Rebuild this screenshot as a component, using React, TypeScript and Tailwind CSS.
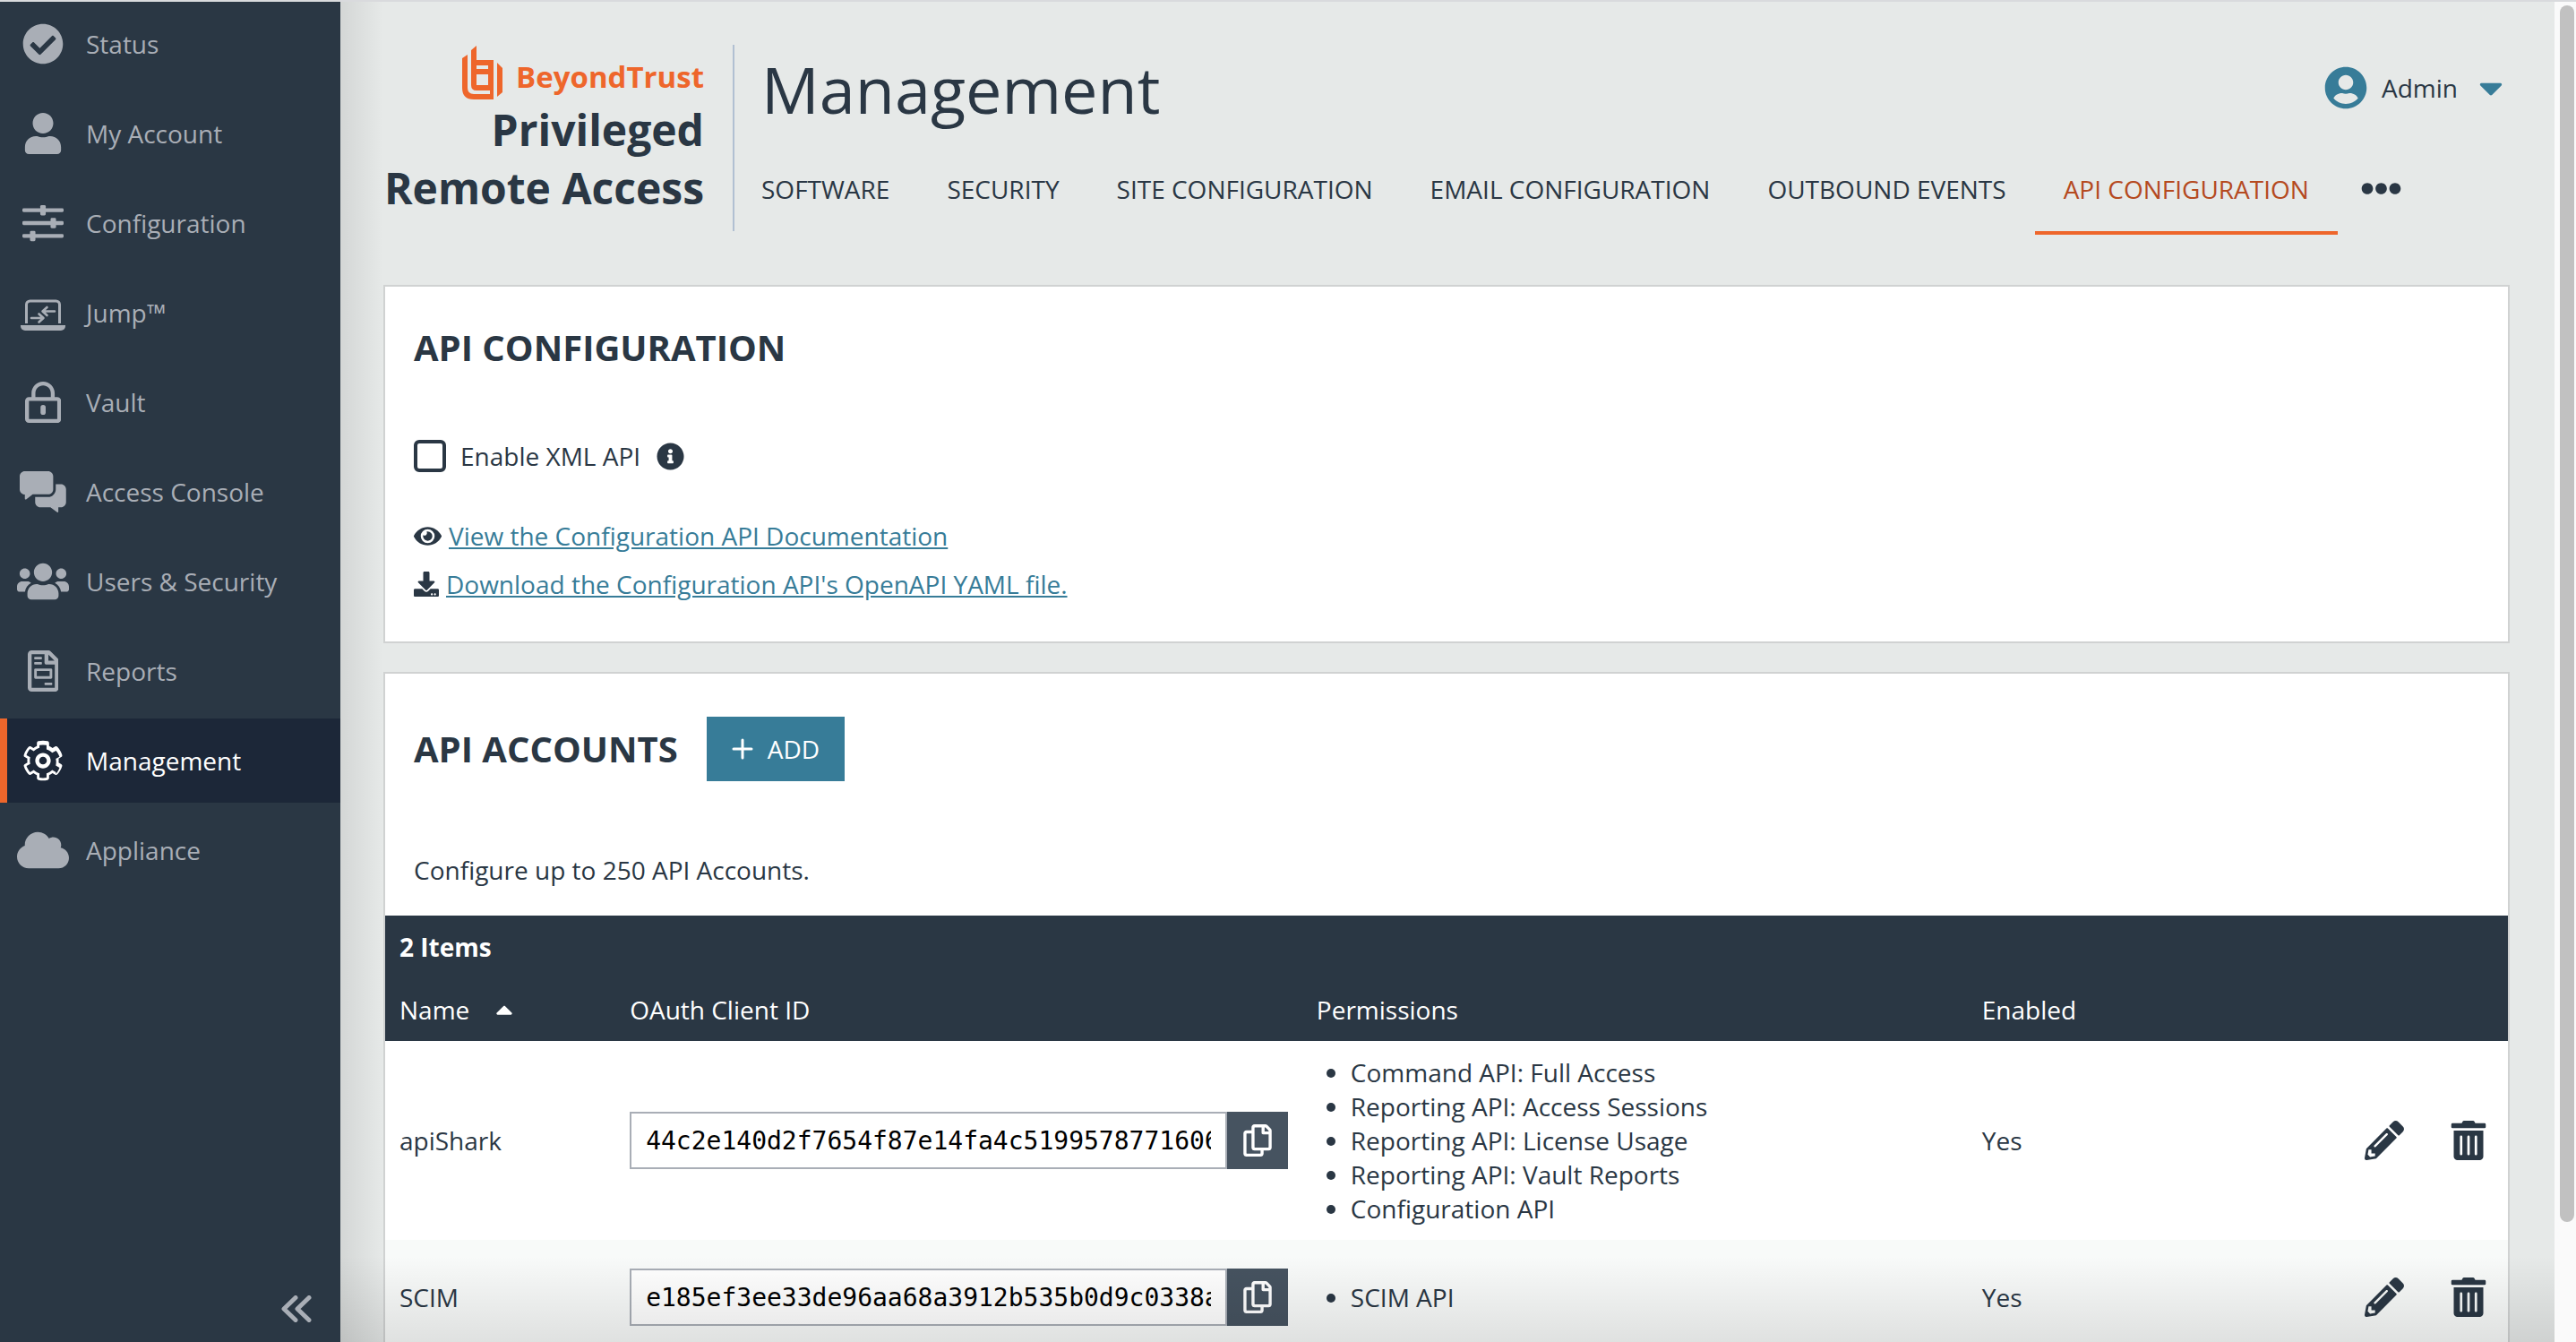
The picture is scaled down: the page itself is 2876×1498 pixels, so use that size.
import React, { useState } from "react";
import {
  FaCaretDown,
  FaCaretUp,
  FaCheckCircle,
  FaCloud,
  FaDownload,
  FaEllipsisH,
  FaEye,
  FaInfoCircle,
  FaPencilAlt,
  FaRegCopy,
  FaTrashAlt,
  FaUser,
  FaUserCircle,
  FaUsers,
} from "react-icons/fa";

function SlidersIcon() {
  return (
    <svg viewBox="0 0 512 512" className="h-[46px] w-[46px]" fill="currentColor" aria-hidden="true">
      <rect x="0" y="72" width="512" height="48" rx="16" />
      <rect x="0" y="232" width="512" height="48" rx="16" />
      <rect x="0" y="392" width="512" height="48" rx="16" />
      <rect x="222" y="32" width="68" height="128" rx="16" />
      <rect x="350" y="192" width="68" height="128" rx="16" />
      <rect x="94" y="352" width="68" height="128" rx="16" />
    </svg>
  );
}

function JumpIcon() {
  return (
    <svg viewBox="0 0 50 46" className="h-[46px] w-[50px]" aria-hidden="true">
      <path d="M6.5 35V14a4 4 0 0 1 4-4h29a4 4 0 0 1 4 4v21" fill="none" stroke="currentColor" strokeWidth="3" />
      <path d="M0 37h50v1a5 5 0 0 1-5 5H5a5 5 0 0 1-5-5z" fill="currentColor" />
      <g fill="none" stroke="currentColor" strokeWidth="2.6" strokeLinecap="round" strokeLinejoin="round">
        <path d="M38 21.5H25M29.5 17l-5 4.5 5 4.5" />
        <path d="M12 29h13M20.500 24.500l5 4.500-5 4.500" />
      </g>
    </svg>
  );
}

function LockIcon() {
  return (
    <svg viewBox="0 0 448 512" className="h-[46px]" fill="currentColor" aria-hidden="true">
      <path d="M400 192h-32v-48C368 64.500 303.500 0 224 0S80 64.500 80 144v48H48c-26.500 0-48 21.500-48 48v224c0 26.500 21.500 48 48 48h352c26.500 0 48-21.500 48-48V240c0-26.500-21.500-48-48-48zm-272-48c0-52.900 43.100-96 96-96s96 43.100 96 96v48H128v-48zm272 320H48V240h352v224z" />
      <rect x="192" y="290" width="64" height="122" rx="32" />
    </svg>
  );
}

function CommentsIcon() {
  return (
    <svg viewBox="0 0 576 512" className="h-[46px]" fill="currentColor" aria-hidden="true">
      <path d="M416 224V64c0-35.300-28.700-64-64-64H64C28.700 0 0 28.700 0 64v160c0 35.300 28.700 64 64 64v54.200c0 8 9.100 12.600 15.500 7.800l82.800-62.100H352c35.300.1 64-28.600 64-63.900zm96-64h-64v64c0 52.900-43.100 96-96 96H192v64c0 35.300 28.700 64 64 64h125.700l82.800 62.100c6.400 4.800 15.500.2 15.500-7.800V448h32c35.300 0 64-28.700 64-64V224c0-35.300-28.700-64-64-64z" />
    </svg>
  );
}

function ReportIcon() {
  return (
    <svg viewBox="0 0 384 512" className="h-[46px]" fill="currentColor" aria-hidden="true">
      <path d="M369.900 97.900L286 14C277 5 264.800 0 252.100 0H48C21.500 0 0 21.500 0 48v416c0 26.500 21.500 48 48 48h288c26.500 0 48-21.500 48-48V131.900c0-12.700-5.100-25-14.100-34zM332.100 128H256V51.900l76.100 76.100zM48 464V48h160v104c0 13.300 10.700 24 24 24h104v288H48z" />
      <rect x="80" y="80" width="96" height="32" rx="8" />
      <rect x="80" y="144" width="96" height="32" rx="8" />
      <rect x="208" y="400" width="96" height="32" rx="8" />
      <path d="M96 224h192a16 16 0 0 1 16 16v96a16 16 0 0 1-16 16H96a16 16 0 0 1-16-16v-96a16 16 0 0 1 16-16zm16 32v64h160v-64z" fillRule="evenodd" />
    </svg>
  );
}

function GearIcon() {
  return (
    <svg viewBox="0 0 512 512" className="h-[46px]" fill="currentColor" aria-hidden="true">
      <path d="M482.696 299.276l-32.610-18.827a195.168 195.168 0 0 0 0-48.899l32.610-18.827c9.576-5.528 14.195-16.902 11.046-27.501-11.214-37.749-31.175-71.728-57.535-99.595-7.634-8.070-19.817-9.836-29.437-4.282l-32.562 18.798a194.125 194.125 0 0 0-42.339-24.480V38.049c0-11.130-7.652-20.804-18.484-23.367-37.644-8.909-77.118-8.910-114.770 0-10.831 2.563-18.484 12.236-18.484 23.367v37.614a194.101 194.101 0 0 0-42.339 24.480L105.230 81.345c-9.621-5.554-21.804-3.788-29.437 4.282-26.360 27.867-46.321 61.847-57.535 99.595-3.149 10.599 1.470 21.972 11.046 27.501l32.610 18.827a195.168 195.168 0 0 0 0 48.899l-32.610 18.827c-9.576 5.528-14.195 16.902-11.046 27.501 11.214 37.748 31.175 71.728 57.535 99.595 7.634 8.070 19.817 9.836 29.437 4.283l32.562-18.798a194.080 194.080 0 0 0 42.339 24.479v37.614c0 11.130 7.652 20.804 18.484 23.367 37.645 8.909 77.118 8.910 114.770 0 10.831-2.563 18.484-12.236 18.484-23.367v-37.614a194.138 194.138 0 0 0 42.339-24.479l32.562 18.798c9.620 5.554 21.803 3.788 29.437-4.283 26.360-27.867 46.321-61.847 57.535-99.595 3.149-10.599-1.470-21.972-11.046-27.501zm-65.479 100.461l-46.309-26.740c-26.988 23.071-36.559 28.876-71.039 41.059v53.479a217.145 217.145 0 0 1-87.738 0v-53.479c-33.621-11.879-43.355-17.395-71.039-41.059l-46.309 26.740c-19.710-22.090-34.689-47.989-43.929-75.958l46.329-26.740c-6.535-35.417-6.538-46.644 0-82.079l-46.329-26.740c9.240-27.969 24.220-53.869 43.929-75.969l46.309 26.760c27.377-23.434 37.063-29.065 71.039-41.069V64.465a216.790 216.790 0 0 1 87.738 0v53.479c33.978 12.005 43.665 17.637 71.039 41.069l46.309-26.760c19.709 22.099 34.689 47.999 43.929 75.969l-46.329 26.740c6.536 35.426 6.538 46.644 0 82.079l46.329 26.740c-9.240 27.968-24.219 53.868-43.929 75.957zM256 160c-52.935 0-96 43.065-96 96s43.065 96 96 96 96-43.065 96-96-43.065-96-96-96zm0 144c-26.468 0-48-21.532-48-48 0-26.467 21.532-48 48-48s48 21.533 48 48c0 26.468-21.532 48-48 48z" />
    </svg>
  );
}

function CollapseIcon() {
  return (
    <svg viewBox="0 0 34 30" className="h-[30px] w-[34px]" fill="none" stroke="currentColor" strokeWidth="5" strokeLinecap="round" strokeLinejoin="round" aria-hidden="true">
      <path d="M16 2.500L3 15l13 12.500M31 2.500L18 15l13 12.500" />
    </svg>
  );
}

function BrandMark() {
  return (
    <svg viewBox="0 0 46 60" className="h-[60px] w-[46px]" fill="currentColor" aria-hidden="true">
      <path d="M0 14l6-4v37q0 7 7 7h18v-4H16q-6 0-6-6V5l6-5v16h19v44H13Q0 60 0 47zM16 22v4h13v-4zM16 32v12h13V32z" fillRule="evenodd" />
      <path d="M39 19l6 6v27l-6 5z" />
    </svg>
  );
}

const navItems = [
  { label: "Status", icon: <FaCheckCircle size={46} /> },
  { label: "My Account", icon: <FaUser size={46} /> },
  { label: "Configuration", icon: <SlidersIcon /> },
  { label: "Jump™", icon: <JumpIcon /> },
  { label: "Vault", icon: <LockIcon /> },
  { label: "Access Console", icon: <CommentsIcon /> },
  { label: "Users & Security", icon: <FaUsers size={58} /> },
  { label: "Reports", icon: <ReportIcon /> },
  { label: "Management", icon: <GearIcon />, active: true },
  { label: "Appliance", icon: <FaCloud size={58} /> },
];

const tabs = [
  { label: "SOFTWARE" },
  { label: "SECURITY" },
  { label: "SITE CONFIGURATION" },
  { label: "EMAIL CONFIGURATION" },
  { label: "OUTBOUND EVENTS" },
  { label: "API CONFIGURATION", active: true },
];

const accounts = [
  {
    name: "apiShark",
    clientId: "44c2e140d2f7654f87e14fa4c5199578771606",
    permissions: [
      "Command API: Full Access",
      "Reporting API: Access Sessions",
      "Reporting API: License Usage",
      "Reporting API: Vault Reports",
      "Configuration API",
    ],
    enabled: "Yes",
  },
  {
    name: "SCIM",
    clientId: "e185ef3ee33de96aa68a3912b535b0d9c0338a",
    permissions: ["SCIM API"],
    enabled: "Yes",
  },
];

function Sidebar() {
  return (
    <aside className="flex w-[380px] shrink-0 flex-col justify-between bg-[#2a3744]">
      <nav aria-label="Main">
        <ul className="flex flex-col gap-[6px]">
          {navItems.map((item) => (
            <li key={item.label}>
              <a
                href="#"
                aria-current={item.active ? "page" : undefined}
                className={
                  item.active
                    ? "flex h-[94px] items-center gap-4 border-l-8 border-[#ee662b] bg-[#1c2738] pl-2 text-white"
                    : "flex h-[94px] items-center gap-4 pl-4 text-[#a9aeb6]"
                }
              >
                <span className="flex w-16 shrink-0 justify-center">{item.icon}</span>
                <span>{item.label}</span>
              </a>
            </li>
          ))}
        </ul>
      </nav>
      <div className="flex justify-end pr-8 pb-[22px]">
        <button type="button" aria-label="Collapse menu" className="text-[#a9aeb6]">
          <CollapseIcon />
        </button>
      </div>
    </aside>
  );
}

function Header() {
  return (
    <header className="flex pt-12">
      <div className="flex h-[208px] w-[392px] shrink-0 flex-col items-end border-r-2 border-[#b1c0d2] pr-8">
        <div className="flex h-[62px] items-center gap-[14px] text-[#ee662b]">
          <BrandMark />
          <span className="pt-2 text-[33px] leading-none font-bold">BeyondTrust</span>
        </div>
        <p className="text-right text-[48px] leading-[65px] font-bold">
          Privileged
          <br />
          Remote Access
        </p>
      </div>
      <div className="flex min-w-0 flex-1 flex-col pl-[30px]">
        <div className="flex items-start justify-between">
          <h1 className="text-[72px] leading-[98px]">Management</h1>
          <button type="button" className="mt-6 flex items-center gap-4">
            <FaUserCircle size={48} className="text-[#377c98]" />
            <span>Admin</span>
            <FaCaretDown size={42} className="text-[#377c98]" />
          </button>
        </div>
        <div className="flex items-start">
          <nav aria-label="Management sections" className="-ml-8 flex">
            {tabs.map((tab) => (
              <a
                key={tab.label}
                href="#"
                className={
                  tab.active
                    ? "border-b-4 border-[#ee662b] px-8 pt-11 pb-7 whitespace-nowrap text-[#b54a1f]"
                    : "px-8 pt-11 pb-8 whitespace-nowrap"
                }
              >
                {tab.label}
              </a>
            ))}
          </nav>
          <button type="button" aria-label="More sections" className="mt-10 ml-[26px]">
            <FaEllipsisH size={45} />
          </button>
        </div>
      </div>
    </header>
  );
}

function ConfigurationCard() {
  const [xmlEnabled, setXmlEnabled] = useState(false);
  return (
    <section className="border-2 border-[#d0d2d2] bg-white px-8 pt-[41px] pb-[37px]">
      <h2 className="text-[40px] leading-[54px] font-bold">API CONFIGURATION</h2>
      <div className="mt-[75px] flex items-center">
        <input
          id="xml-api"
          type="checkbox"
          checked={xmlEnabled}
          onChange={(e) => setXmlEnabled(e.target.checked)}
          className="h-9 w-9 appearance-none rounded-md border-4 border-[#2a3744] bg-white checked:bg-[#377c98]"
        />
        <label htmlFor="xml-api" className="ml-4">
          Enable XML API
        </label>
        <button type="button" aria-label="About the XML API" className="ml-[18px]">
          <FaInfoCircle size={31} />
        </button>
      </div>
      <ul className="mt-[43px]">
        <li className="flex h-[54px] items-center gap-2">
          <FaEye size={31} />
          <a href="#" className="text-[#377c98] underline">
            View the Configuration API Documentation
          </a>
        </li>
        <li className="flex h-[54px] items-center gap-2">
          <FaDownload size={28} />
          <a href="#" className="text-[#377c98] underline">
            Download the Configuration API's OpenAPI YAML file.
          </a>
        </li>
      </ul>
    </section>
  );
}

function AccountsTable() {
  return (
    <table className="w-full table-fixed text-left">
      <colgroup>
        <col className="w-[10.850%]" />
        <col className="w-[32.350%]" />
        <col className="w-[31.350%]" />
        <col />
      </colgroup>
      <thead className="bg-[#2a3744] text-white">
        <tr>
          <th colSpan={4} className="px-4 pt-4 pb-[14px] font-bold">
            2 Items
          </th>
        </tr>
        <tr>
          <th className="px-4 pt-[18px] pb-4 font-normal" aria-sort="ascending">
            <button type="button" className="flex items-center gap-6">
              Name
              <FaCaretUp size={30} />
            </button>
          </th>
          <th className="px-4 pt-[18px] pb-4 font-normal">OAuth Client ID</th>
          <th className="px-4 pt-[18px] pb-4 font-normal">Permissions</th>
          <th className="px-4 pt-[18px] pb-4 font-normal">Enabled</th>
        </tr>
      </thead>
      <tbody>
        {accounts.map((account) => (
          <tr key={account.name} className="even:bg-[#f8faf9]">
            <td className="px-4">{account.name}</td>
            <td className="px-4 py-8">
              <div className="flex">
                <input
                  readOnly
                  aria-label={"OAuth Client ID for " + account.name}
                  value={account.clientId}
                  className="h-16 min-w-0 flex-1 border-2 border-[#a9aeb6] bg-white px-4 font-['DejaVu_Sans_Mono',monospace] text-black"
                />
                <button
                  type="button"
                  aria-label="Copy client ID"
                  className="flex h-16 w-[68px] items-center justify-center bg-[#465360] text-white"
                >
                  <FaRegCopy size={36} />
                </button>
              </div>
            </td>
            <td className="px-4 py-4">
              <ul className="list-disc pl-[38px]">
                {account.permissions.map((permission) => (
                  <li key={permission}>{permission}</li>
                ))}
              </ul>
            </td>
            <td className="px-4">
              <div className="flex items-center">
                <span className="flex-1">{account.enabled}</span>
                <button type="button" aria-label={"Edit " + account.name}>
                  <FaPencilAlt size={44} />
                </button>
                <button type="button" aria-label={"Delete " + account.name} className="mr-[6px] ml-[50px]">
                  <FaTrashAlt size={44} />
                </button>
              </div>
            </td>
          </tr>
        ))}
      </tbody>
    </table>
  );
}

function AccountsCard() {
  return (
    <section className="mt-8 border-2 border-[#d0d2d2] bg-white">
      <div className="px-8 pt-12">
        <div className="flex items-center gap-8">
          <h2 className="text-[40px] leading-[54px] font-bold">API ACCOUNTS</h2>
          <button type="button" className="flex h-[72px] items-center gap-4 bg-[#377c98] px-7 text-white">
            <svg viewBox="0 0 24 24" className="h-6 w-6" stroke="currentColor" strokeWidth="3" strokeLinecap="round" aria-hidden="true">
              <path d="M12 2v20M2 12h20" />
            </svg>
            ADD
          </button>
        </div>
        <p className="pt-20 pb-[32px]">Configure up to 250 API Accounts.</p>
      </div>
      <AccountsTable />
    </section>
  );
}

export default function App() {
  return (
    <div className="flex h-screen overflow-hidden border-t-2 border-[#d9dadd] bg-[#e6e9e8] font-['Open_Sans',sans-serif] text-[28px] leading-[38px] text-[#2a3744]">
      <Sidebar />
      <main className="relative min-w-0 flex-1 overflow-hidden pr-[50px] pl-12">
        <Header />
        <div className="pt-14">
          <ConfigurationCard />
          <AccountsCard />
        </div>
        <div className="pointer-events-none absolute inset-y-0 left-0 w-12 bg-linear-to-r from-black/8 to-transparent" />
        <div className="pointer-events-none absolute inset-x-0 bottom-0 h-24 bg-linear-to-t from-black/10 to-transparent" />
      </main>
      <div className="flex w-6 shrink-0 justify-end bg-[#fafafa] pt-1 pr-[2px]">
        <div className="h-[91%] w-4 rounded-full bg-[#c1c1c1]" />
      </div>
    </div>
  );
}
